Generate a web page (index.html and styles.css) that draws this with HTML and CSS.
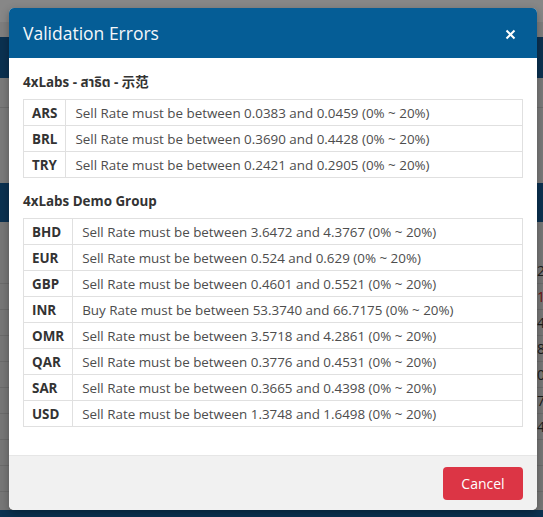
FILE: index.html
```html
<!DOCTYPE html>
<html>
<head>
<meta charset="utf-8">
<link rel="stylesheet" href="styles.css">
</head>
<body>
<div class="page">
  <div class="bg-top"></div>
  <div class="bg-band"></div>
  <div class="bg-grey">
    <div class="bg-line"></div>
  </div>
  <div class="bg-band bg-band2"></div>
  <div class="bg-rows">
    <div class="bg-row"><span>2</span></div>
    <div class="bg-row"><span class="red">1</span></div>
    <div class="bg-row"><span>4</span></div>
    <div class="bg-row"><span>8</span></div>
    <div class="bg-row"><span>0</span></div>
    <div class="bg-row"><span>7</span></div>
    <div class="bg-row"><span>4</span></div>
    <div class="bg-row"><span></span></div>
    <div class="bg-row"><span></span></div>
  </div>
  <div class="bg-bottom"></div>
</div>

<div class="modal">
  <div class="modal-header">
    <h1 class="modal-title">Validation Errors</h1>
    <span class="close" aria-label="Close">
      <svg width="11" height="11" viewBox="0 0 11 11"><path d="M1.5 1.5 L9.5 9.5 M9.5 1.5 L1.5 9.5" stroke="#fff" stroke-width="2" stroke-linecap="butt"/></svg>
    </span>
  </div>
  <div class="modal-body">
    <h2 class="group-title">4xLabs - สาธิต - 示范</h2>
    <table class="errors">
      <tr><th>ARS</th><td>Sell Rate must be between 0.0383 and 0.0459 (0% ~ 20%)</td></tr>
      <tr><th>BRL</th><td>Sell Rate must be between 0.3690 and 0.4428 (0% ~ 20%)</td></tr>
      <tr><th>TRY</th><td>Sell Rate must be between 0.2421 and 0.2905 (0% ~ 20%)</td></tr>
    </table>
    <h2 class="group-title">4xLabs Demo Group</h2>
    <table class="errors">
      <tr><th>BHD</th><td>Sell Rate must be between 3.6472 and 4.3767 (0% ~ 20%)</td></tr>
      <tr><th>EUR</th><td>Sell Rate must be between 0.524 and 0.629 (0% ~ 20%)</td></tr>
      <tr><th>GBP</th><td>Sell Rate must be between 0.4601 and 0.5521 (0% ~ 20%)</td></tr>
      <tr><th>INR</th><td>Buy Rate must be between 53.3740 and 66.7175 (0% ~ 20%)</td></tr>
      <tr><th>OMR</th><td>Sell Rate must be between 3.5718 and 4.2861 (0% ~ 20%)</td></tr>
      <tr><th>QAR</th><td>Sell Rate must be between 0.3776 and 0.4531 (0% ~ 20%)</td></tr>
      <tr><th>SAR</th><td>Sell Rate must be between 0.3665 and 0.4398 (0% ~ 20%)</td></tr>
      <tr><th>USD</th><td>Sell Rate must be between 1.3748 and 1.6498 (0% ~ 20%)</td></tr>
    </table>
  </div>
  <div class="modal-footer">
    <button class="btn-cancel">Cancel</button>
  </div>
</div>
</body>
</html>
```

FILE: styles.css
```css
* { box-sizing: border-box; }
html, body { margin: 0; padding: 0; }
body {
  width: 543px;
  height: 517px;
  overflow: hidden;
  position: relative;
  font-family: "Open Sans", "Noto Sans", "Noto Sans Thai", "Noto Sans CJK SC", sans-serif;
  background: #7b7b7b;
}

/* dimmed page behind the dialog */
.page { display: flex; flex-direction: column; height: 517px; }
.bg-top { height: 37px; background: #7e7e7e; border-top: 22px solid #878787; }
.bg-band { height: 41px; background: #0b3150; }
.bg-grey { height: 105px; background: #7a7a7a; padding-top: 29px; }
.bg-line { height: 1px; background: #6c6c6c; }
.bg-band2 { height: 39px; }
.bg-rows { flex: 1; background: #777; overflow: hidden; }
.bg-row {
  height: 26px;
  border-bottom: 1px solid #6b6b6b;
  display: flex;
  justify-content: flex-end;
  align-items: center;
  font-family: "Open Sans", sans-serif;
  font-size: 14px;
  color: #1c1c1c;
}
.bg-row:first-child { height: 62px; padding-top: 36px; }
.bg-row span { width: 6px; overflow: hidden; line-height: 20px; }
.bg-row .red { color: #6e1010; }
.bg-bottom { height: 7px; background: #0b3150; }

/* dialog */
.modal {
  position: absolute;
  left: 9px;
  top: 8px;
  width: 528px;
  background: #fff;
  border-radius: 5px;
  overflow: hidden;
  box-shadow: 0 3px 9px rgba(0,0,0,0.3);
}
.modal-header {
  height: 50px;
  background: #055d96;
  display: flex;
  align-items: center;
  justify-content: space-between;
  padding: 0 21px 0 14px;
}
.modal-title {
  margin: 0;
  font-size: 17.5px;
  font-weight: 400;
  color: #f4f7fa;
}
.close { display: flex; align-items: center; padding-top: 2px; }

.modal-body { padding: 14px 14px 15px; }
.group-title {
  margin: 0 0 7px;
  font-size: 13.4px;
  line-height: 20px;
  font-weight: 700;
  color: #333;
}
.errors {
  width: 100%;
  border-collapse: collapse;
  margin-bottom: 13px;
  font-size: 13.4px;
}
.errors th, .errors td {
  border: 1px solid #e0e0e0;
  height: 26px;
  padding: 0 8px;
  line-height: 20px;
  text-align: left;
  white-space: nowrap;
}
.errors th { width: 1%; font-weight: 700; color: #333; }
.errors td { color: #4d4d4d; font-weight: 400; padding-left: 9px; }

.modal-footer {
  background: #f1f1f1;
  border-top: 1px solid #e6e6e6;
  padding: 11px 14px 10px;
  display: flex;
  justify-content: flex-end;
}
.btn-cancel {
  width: 80px;
  height: 33px;
  border: none;
  border-radius: 4px;
  background: #dc3545;
  color: #fff;
  font-family: "Open Sans", sans-serif;
  font-size: 14px;
  padding: 0;
}
```
